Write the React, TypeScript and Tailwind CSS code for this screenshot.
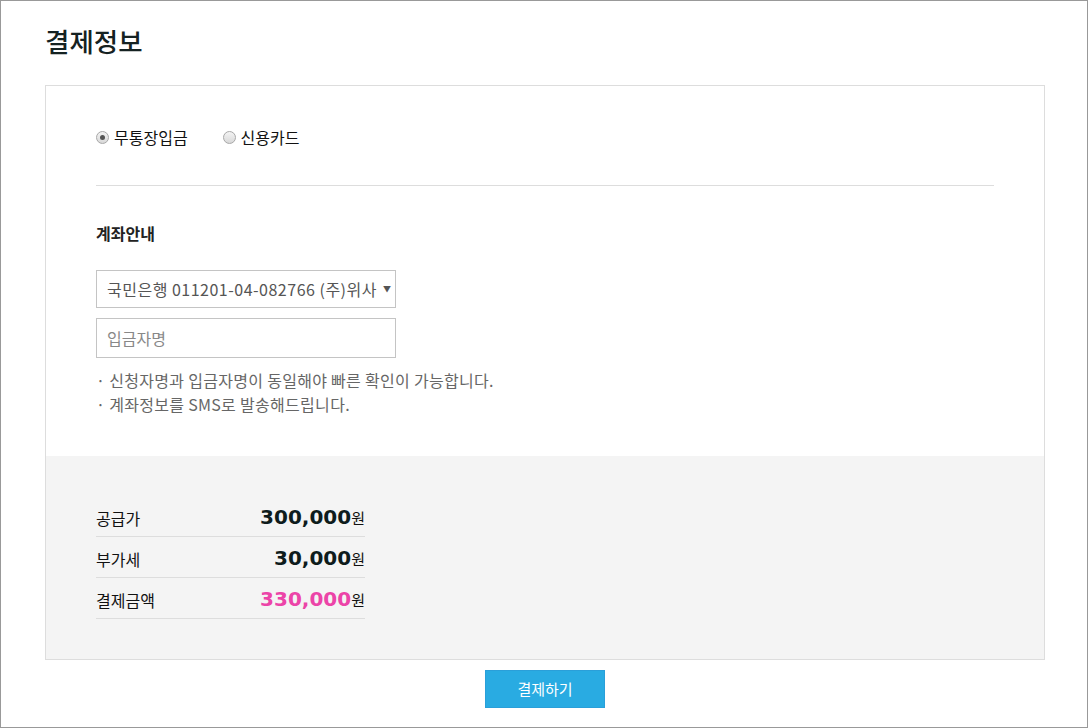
const font = "font-['Noto_Sans_CJK_KR','Noto_Sans',sans-serif]";

type RadioProps = { label: string; checked?: boolean };

function Radio({ label, checked }: RadioProps) {
  return (
    <label className="flex items-center gap-[5px] text-[16px] leading-[22px] text-[#111]">
      <span className="flex h-[13px] w-[13px] items-center justify-center rounded-full border border-[#a8a8a8] bg-gradient-to-b from-[#f4f4f4] to-[#d8d8d8]">
        {checked && <span className="h-[5px] w-[5px] rounded-full bg-[#555]" />}
      </span>
      {label}
    </label>
  );
}

const rows = [
  { label: '공급가', amount: '300,000', pink: false },
  { label: '부가세', amount: '30,000', pink: false },
  { label: '결제금액', amount: '330,000', pink: true },
];

export default function App() {
  return (
    <div className={`${font} flex h-[728px] flex-col border border-[#999] bg-white px-[44px]`}>
      <h1 className="mb-[26px] pt-[22px] text-[26.5px] font-medium leading-[36px] text-[#152222]">결제정보</h1>

      <div className="w-[1000px] border border-[#ddd]">
        <div className="px-[50px] pb-[40px] pt-[40px]">
          <div className="flex items-center gap-[35px]">
            <Radio label="무통장입금" checked />
            <Radio label="신용카드" />
          </div>

          <div className="mt-[37px] border-t border-[#ddd]" />

          <h2 className="mt-[37px] text-[16px] font-bold leading-[20px] text-[#222]">계좌안내</h2>

          <div className="mt-[27px] flex h-[38px] w-[300px] items-center justify-between border border-[#c4c4c4] pl-[10px] pr-[4px] text-[16px] text-[#555]">
            <span className="tracking-[0.5px]">국민은행 011201-04-082766 (주)위사</span>
            <span className="text-[8px] text-[#555]">▼</span>
          </div>

          <div className="mt-[10px] flex h-[40px] w-[300px] items-center border border-[#c4c4c4] px-[10px] text-[16px] text-[#888]">
            입금자명
          </div>

          <div className="mt-[10px] text-[16px] leading-[24px] tracking-[0.3px] text-[#666]">
            <p>· 신청자명과 입금자명이 동일해야 빠른 확인이 가능합니다.</p>
            <p>· 계좌정보를 SMS로 발송해드립니다.</p>
          </div>
        </div>

        <div className="bg-[#f4f4f4] px-[50px] py-[40px]">
          <div className="w-[269px]">
            {rows.map((r) => (
              <div key={r.label} className="flex h-[41px] items-end justify-between border-b border-[#ddd] pb-[8px]">
                <span className="text-[16px] leading-[20px] text-[#111]">{r.label}</span>
                <span className="flex items-baseline leading-[20px]">
                  <span
                    className={`font-['DejaVu_Sans',sans-serif] text-[20px] font-bold ${r.pink ? 'text-[#ec44a8]' : 'text-[#0e1c1c]'}`}
                  >
                    {r.amount}
                  </span>
                  <span className="text-[15px] text-[#111]">원</span>
                </span>
              </div>
            ))}
          </div>
        </div>
      </div>

      <div className="mt-[10px] flex w-[1000px] justify-center">
        <button
          type="button"
          className="h-[38px] w-[120px] border border-[#2a9fd9] bg-[#29abe2] text-[15px] text-white"
        >
          결제하기
        </button>
      </div>
    </div>
  );
}
